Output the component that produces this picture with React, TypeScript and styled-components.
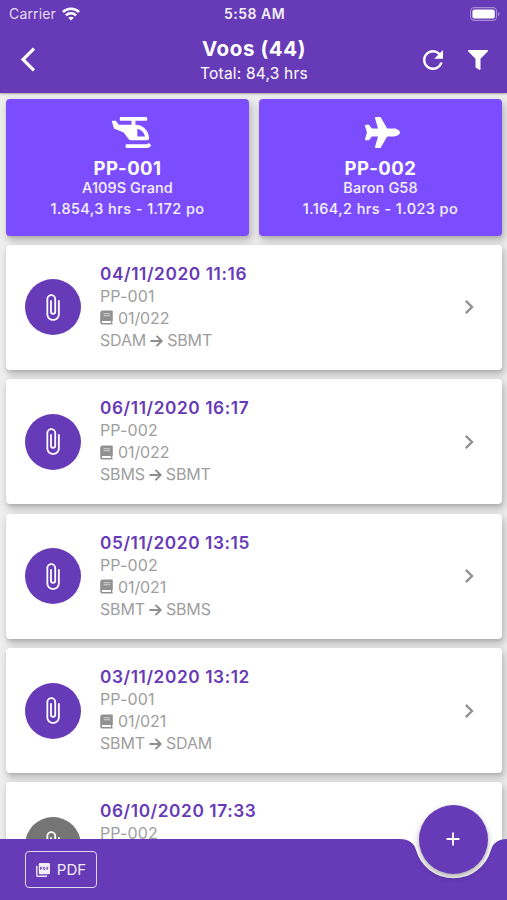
import React from "react";
import styled, { createGlobalStyle } from "styled-components";
import { MdRefresh, MdAttachFile, MdChevronRight, MdAdd } from "react-icons/md";
import { FaFilter, FaPlane, FaHelicopter } from "react-icons/fa";

const GlobalStyle = createGlobalStyle`
  * { box-sizing: border-box; }
  body { margin: 0; background: #eee; }
`;

const Screen = styled.div`
  position: relative;
  width: 507px;
  height: 900px;
  overflow: hidden;
  background: #eeeeee;
  font-family: Inter, "Liberation Sans", sans-serif;
`;

const Header = styled.header`
  position: relative;
  z-index: 2;
  height: 93px;
  background: #673ab7;
  color: #fff;
  box-shadow: 0 1px 2px rgba(0, 0, 0, 0.3);
`;

const StatusBar = styled.div`
  display: grid;
  grid-template-columns: 1fr auto 1fr;
  align-items: center;
  height: 27px;
  padding: 0 7px 0 9px;
`;

const Carrier = styled.div`
  display: flex;
  align-items: center;
  gap: 6px;
  font-size: 14px;
  letter-spacing: 0.15px;
  color: #e6def4;
`;

const Clock = styled.div`
  font-size: 14px;
  font-weight: 600;
  letter-spacing: 0.5px;
  color: #f3effa;
`;

const Battery = styled.div`
  display: flex;
  justify-content: flex-end;
`;

const TitleBar = styled.div`
  display: grid;
  grid-template-columns: 110px 1fr 110px;
  height: 66px;
`;

const BackButton = styled.div`
  padding: 20px 0 0 20px;
  svg { display: block; }
`;

const Titles = styled.div`
  text-align: center;
  padding: 10px 0 0 1px;
`;

const Title = styled.h1`
  margin: 0;
  font-size: 20.5px;
  line-height: 23px;
  font-weight: 700;
  letter-spacing: 0.6px;
`;

const Subtitle = styled.div`
  font-size: 15.5px;
  line-height: 28px;
  letter-spacing: 0.2px;
`;

const Actions = styled.div`
  display: flex;
  align-items: center;
  justify-content: flex-end;
  gap: 20px;
  padding: 0 19px 0 0;
`;

const Content = styled.main`
  display: flex;
  flex-direction: column;
  gap: 9.4px;
  padding: 5.5px 5px 0 6px;
`;

const Aircrafts = styled.div`
  display: grid;
  grid-template-columns: 243px 243px;
  gap: 10px;
`;

const cardShadow = "2px 4px 7px 1px rgba(0, 0, 0, 0.22), 0 2px 2px rgba(0, 0, 0, 0.06)";

const AircraftCard = styled.div`
  display: flex;
  flex-direction: column;
  align-items: center;
  height: 137px;
  border-radius: 4px;
  background: #7c4dff;
  color: #fff;
  box-shadow: ${cardShadow};
`;

const AircraftIcon = styled.div<{ $shift: number }>`
  display: flex;
  align-items: center;
  height: 38px;
  margin: 15px 0 0 ${(p) => p.$shift}px;
`;

const AircraftName = styled.div`
  font-size: 18.5px;
  font-weight: 700;
  line-height: 20px;
  margin-top: 6px;
  letter-spacing: 0.5px;
`;

const AircraftLine = styled.div`
  font-size: 14.5px;
  font-weight: 500;
  line-height: 20.5px;
  letter-spacing: 0.1px;
  color: #f7f3ff;
`;

const AircraftTotals = styled(AircraftLine)`
  line-height: 22px;
  letter-spacing: 0.42px;
`;

const FlightCard = styled.article`
  display: flex;
  align-items: center;
  flex: none;
  height: 125px;
  padding: 0 19px 0 19px;
  border-radius: 4px;
  background: #fff;
  box-shadow: ${cardShadow};
`;

const Avatar = styled.div<{ $muted?: boolean }>`
  display: flex;
  align-items: center;
  justify-content: center;
  width: 56px;
  height: 56px;
  margin-right: 19px;
  padding-right: 1px;
  border-radius: 50%;
  background: ${(p) => (p.$muted ? "#757575" : "#673ab7")};
  color: #fff;
`;

const Details = styled.div`
  flex: 1;
  color: #9e9e9e;
  font-size: 16px;
  line-height: 22px;
  padding-bottom: 2px;
`;

const FlightDate = styled.div`
  color: #673ab7;
  font-size: 17.3px;
  font-weight: 600;
  line-height: 22px;
  padding-top: 1px;
  letter-spacing: 0.58px;
`;

const Line = styled.div<{ $gap?: number; $spacing?: number }>`
  display: flex;
  align-items: center;
  gap: ${(p) => p.$gap ?? 0}px;
  height: 22px;
  letter-spacing: ${(p) => p.$spacing ?? 0}px;
`;

const BottomBar = styled.footer`
  position: absolute;
  z-index: 2;
  left: 0;
  bottom: 0;
  display: flex;
  align-items: flex-start;
  width: 507px;
  height: 61px;
  padding: 12px 25px;
  background: #673ab7;
  clip-path: path("M0 0H400C409 0 414 4 416 11A39 39 0 0 0 491 11C493 4 498 0 507 0V61H0Z");
`;

const PdfButton = styled.button`
  display: flex;
  align-items: center;
  justify-content: center;
  gap: 7px;
  width: 72px;
  height: 37px;
  padding: 0;
  border: 1.5px solid #e2d8f2;
  border-radius: 4px;
  background: transparent;
  color: #f1ecf9;
  font: 400 15px/20px Inter, sans-serif;
`;

const AddButton = styled.button`
  position: absolute;
  z-index: 3;
  left: 419px;
  top: 804.5px;
  display: flex;
  align-items: center;
  justify-content: center;
  width: 69px;
  height: 69px;
  padding: 0 1px 0 0;
  border: 0;
  border-radius: 50%;
  background: #673ab7;
  color: #fff;
  box-shadow: 0 3px 5px rgba(0, 0, 0, 0.25), 0 2px 8px rgba(0, 0, 0, 0.1);
`;

const flights = [
  { date: "04/11/2020 11:16", plane: "PP-001", log: "01/022", from: "SDAM", to: "SBMT" },
  { date: "06/11/2020 16:17", plane: "PP-002", log: "01/022", from: "SBMS", to: "SBMT" },
  { date: "05/11/2020 13:15", plane: "PP-002", log: "01/021", from: "SBMT", to: "SBMS" },
  { date: "03/11/2020 13:12", plane: "PP-001", log: "01/021", from: "SBMT", to: "SDAM" },
  { date: "06/10/2020 17:33", plane: "PP-002", log: "01/020", from: "SDAM", to: "SBMT", muted: true },
];

const WifiIcon = () => (
  <svg width="18" height="14" viewBox="0 0 18 14" fill="none" stroke="#fff" strokeWidth="2.6">
    <path d="M.9 5C5.5.6 12.5.6 17.1 5" />
    <path d="M3.9 8.4c2.9-2.8 7.3-2.8 10.2 0" />
    <path d="M6.2 10.8c1.6-1.5 4-1.5 5.6 0L9 13.5Z" fill="#fff" stroke="none" />
  </svg>
);

const BatteryIcon = () => (
  <svg width="30" height="14" viewBox="0 0 30 14">
    <rect x=".6" y=".6" width="26" height="12.8" rx="3.8" fill="none" stroke="#a78bd6" strokeWidth="1.1" />
    <rect x="2.4" y="2.4" width="22.4" height="9.2" rx="2.2" fill="#fff" />
    <path d="M28 4.8c2 .8 2 3.6 0 4.4Z" fill="#a78bd6" />
  </svg>
);

const BackIcon = () => (
  <svg width="16" height="25" viewBox="0 0 16 25" fill="none" stroke="#fff" strokeWidth="3.2">
    <path d="M14 1.7 3 12.5 14 23.3" />
  </svg>
);

const BookIcon = () => (
  <svg width="13" height="15" viewBox="0 0 13 15">
    <path
      fill="#919191"
      fillRule="evenodd"
      d="M2.7.4H12q.8 0 .8.8v9.2q0 .6-.5.9-.3 1 0 2 .5.2.5.7t-.6.6H2.8Q.2 14.5.2 12V3Q.2.4 2.7.4ZM2.7 11.1q-.9 0-.9.9t.9.9h8.2v-1.8Z"
    />
    <path d="M3.6 3.7h6.6M3.6 5.7h6.6" stroke="#d2d2d2" strokeWidth="1.1" />
  </svg>
);

const ArrowIcon = () => (
  <svg
    width="13"
    height="14"
    viewBox="0 0 13 14"
    fill="none"
    stroke="#8d8d8d"
    strokeWidth="1.9"
    strokeLinecap="round"
    strokeLinejoin="round"
  >
    <path d="M1.2 8h10.2M7 3.4 11.7 8 7 12.6" />
  </svg>
);

const PdfIcon = () => (
  <svg width="14" height="14" viewBox="0 0 14 14" fill="none">
    <path d="M.8 3v9.2q0 1 1 1H11" stroke="#f1ecf9" strokeWidth="1.4" />
    <rect x="2.8" width="11.2" height="11.2" rx="1.2" fill="#f1ecf9" />
    <path
      d="M4.5 7V4.2h1.2v1.4H4.5M7.6 4.2v2.4h.6q.8 0 .8-.8V5q0-.8-.8-.8ZM10.9 7V4.2h1.4M10.9 5.6h1.2"
      stroke="#673ab7"
      strokeWidth=".8"
    />
  </svg>
);

export default function App() {
  return (
    <Screen>
      <GlobalStyle />
      <Header>
        <StatusBar>
          <Carrier>
            Carrier <WifiIcon />
          </Carrier>
          <Clock>5:58 AM</Clock>
          <Battery>
            <BatteryIcon />
          </Battery>
        </StatusBar>
        <TitleBar>
          <BackButton>
            <BackIcon />
          </BackButton>
          <Titles>
            <Title>Voos (44)</Title>
            <Subtitle>Total: 84,3 hrs</Subtitle>
          </Titles>
          <Actions>
            <MdRefresh size={30} />
            <FaFilter size={20} />
          </Actions>
        </TitleBar>
      </Header>

      <Content>
        <Aircrafts>
          <AircraftCard>
            <AircraftIcon $shift={7}>
              <FaHelicopter size={39} />
            </AircraftIcon>
            <AircraftName>PP-001</AircraftName>
            <AircraftLine>A109S Grand</AircraftLine>
            <AircraftTotals>1.854,3 hrs - 1.172 po</AircraftTotals>
          </AircraftCard>
          <AircraftCard>
            <AircraftIcon $shift={3}>
              <FaPlane size={35} />
            </AircraftIcon>
            <AircraftName>PP-002</AircraftName>
            <AircraftLine>Baron G58</AircraftLine>
            <AircraftTotals>1.164,2 hrs - 1.023 po</AircraftTotals>
          </AircraftCard>
        </Aircrafts>

        {flights.map((f) => (
          <FlightCard key={f.date}>
            <Avatar $muted={f.muted}>
              <MdAttachFile size={29} />
            </Avatar>
            <Details>
              <FlightDate>{f.date}</FlightDate>
              <Line $spacing={0.15}>{f.plane}</Line>
              <Line $gap={5} $spacing={-0.1}>
                <BookIcon />
                {f.log}
              </Line>
              <Line $gap={4} $spacing={-0.15}>
                {f.from}
                <ArrowIcon />
                {f.to}
              </Line>
            </Details>
            <MdChevronRight size={28} color="#929292" />
          </FlightCard>
        ))}
      </Content>

      <BottomBar>
        <PdfButton>
          <PdfIcon />
          PDF
        </PdfButton>
      </BottomBar>
      <AddButton aria-label="Adicionar">
        <MdAdd size={22} />
      </AddButton>
    </Screen>
  );
}
